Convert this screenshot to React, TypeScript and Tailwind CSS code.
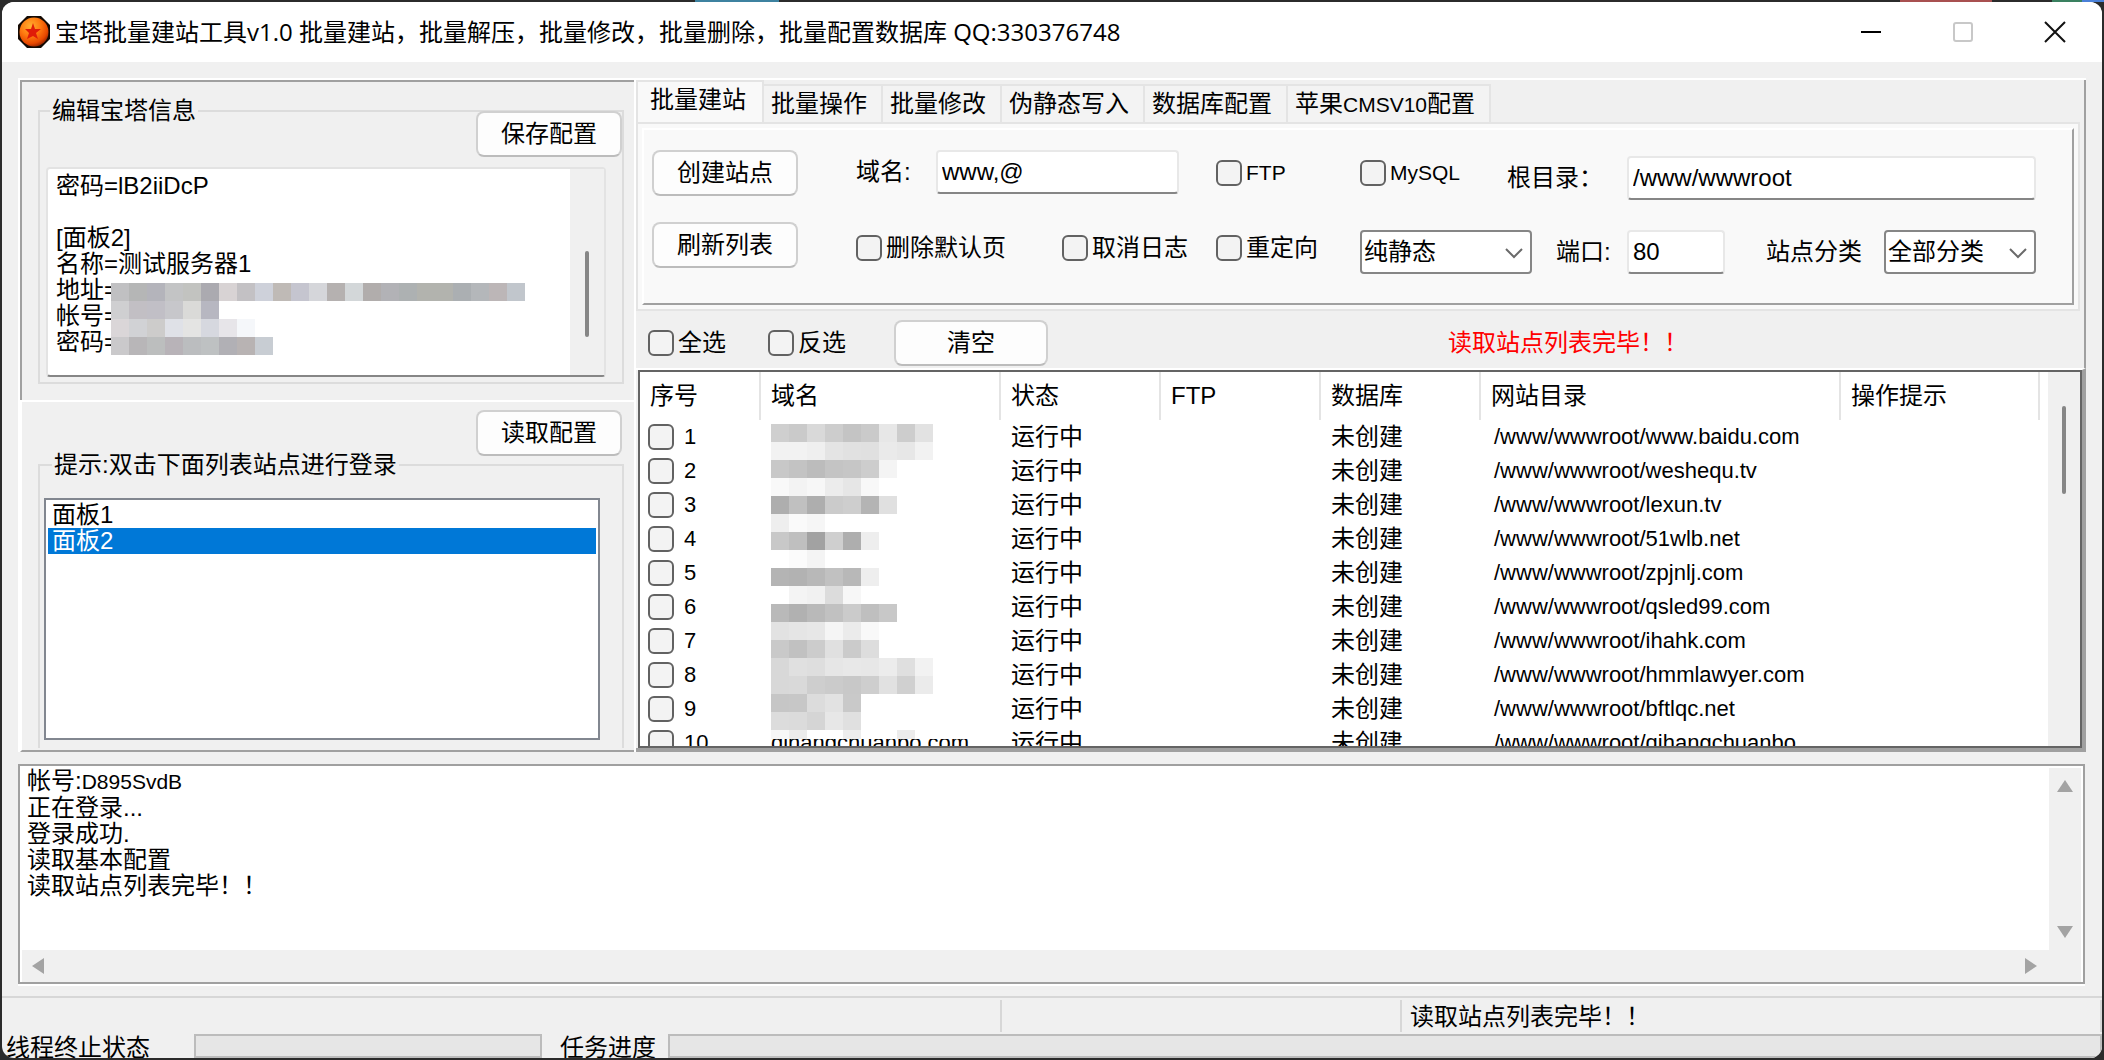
import { useState, type ReactNode } from "react";
import clsx from "clsx";

const tabs = ["批量建站", "批量操作", "批量修改", "伪静态写入", "数据库配置"];

const panels = ["面板1", "面板2"];

const sites = [
  { id: 1, domain: "", path: "/www/wwwroot/www.baidu.com" },
  { id: 2, domain: "", path: "/www/wwwroot/weshequ.tv" },
  { id: 3, domain: "", path: "/www/wwwroot/lexun.tv" },
  { id: 4, domain: "", path: "/www/wwwroot/51wlb.net" },
  { id: 5, domain: "", path: "/www/wwwroot/zpjnlj.com" },
  { id: 6, domain: "", path: "/www/wwwroot/qsled99.com" },
  { id: 7, domain: "", path: "/www/wwwroot/ihahk.com" },
  { id: 8, domain: "", path: "/www/wwwroot/hmmlawyer.com" },
  { id: 9, domain: "", path: "/www/wwwroot/bftlqc.net" },
  { id: 10, domain: "qihangchuanbo.com", path: "/www/wwwroot/qihangchuanbo" },
];

const configText = `密码=lB2iiDcP

[面板2]
名称=测试服务器1
地址=
帐号=
密码=`;

// one string per mosaic row, "--" is an empty cell
const domainMask = [
  "cf ca d9 cd c4 ca e7 cd e2",
  "f2 f2 ef e4 e1 e0 ea e7 f2",
  "c8 c3 bc c4 c6 cd f4",
  "f9 f3 f7 ec e6 f8",
  "ae c0 ae cb ce b4 e0",
  "ee fa f6",
  "c8 bf a2 cf ae ee",
  "-- fb f4",
  "b4 b2 b8 c1 b8 ee",
  "-- f4 f1 dc f7",
  "b9 b1 b9 c1 cb bf c8",
  "e2 e5 e7 f5 eb f9",
  "c9 c1 cc e0 cb dd",
  "d8 e0 de e6 e8 e7 ec df f2",
  "d8 d9 ce cb c8 ce e1 d0 eb",
  "c6 c7 dc e2 c9",
  "dc db d5 e7 e0",
  "f7 ec ff ff ed ff ff ec ff ff ff",
];

const configMask = [
  "c0c0c2 b5b6b6 b4b4bb c3c4c5 c2c3c0 abaab0 d8d3d4 c3c1c4 ced1da bfbab6 c5c5cf d5d6da b5b1b0 d3d7d9 b1adac b2b2b6 adb1b2 b2b3ae b2b3ae abafb2 b4b7ba bcb6b7 c1c6cc",
  "cfcfd1 c2bfc4 c1bfc6 c7c7cb dadad8 b7b7c1",
  "dad6d8 d1d2d5 cdcccb dfe1e7 e4e4e3 d6d8df e7e5e9 f5f7fa",
  "cac9cb b8b6b8 bcbebe b8b3b8 bbbdbf bec1c2 b1b0b5 b8b3b3 c8cdd3",
];

const Mosaic = ({ rows, height, className }: { rows: string[]; height: number; className?: string }) => (
  <svg width={23 * 18} height={height} className={className} shapeRendering="crispEdges" aria-hidden="true">
    {rows.map((row, y) =>
      row.split(" ").map((c, x) =>
        c === "--" ? null : (
          <rect key={`${x}-${y}`} x={x * 18} y={y * 18} width="18" height="18" fill={`#${c.length === 2 ? c + c + c : c}`} />
        )
      )
    )}
  </svg>
);

const AppIcon = () => (
  <svg width="34" height="34" viewBox="0 0 34 34" aria-hidden="true">
    <defs>
      <radialGradient id="ball" cx="0.38" cy="0.3" r="0.75">
        <stop offset="0" stopColor="#ffb030" />
        <stop offset="0.45" stopColor="#ff7a10" />
        <stop offset="0.8" stopColor="#e84800" />
        <stop offset="1" stopColor="#902000" />
      </radialGradient>
    </defs>
    <path d="M10 1h14l9 9v14l-9 9H10l-9-9V10z" fill="#140a04" />
    <circle cx="17" cy="17" r="14.5" fill="url(#ball)" />
    <path d="M16 8l2 6 6 0-5 4 2 6-5-3-6 3 2-6-4-4 6 0z" fill="#e01c08" />
  </svg>
);

const Button = ({ children, className }: { children: ReactNode; className?: string }) => (
  <button
    type="button"
    className={clsx(
      "h-[46px] rounded-lg border-2 border-[#d0d0d0] border-b-[#bcbcbc] bg-[#fdfdfd] text-center leading-none hover:bg-[#e5f1fb]",
      className
    )}
  >
    {children}
  </button>
);

const box =
  "size-[26px] shrink-0 appearance-none rounded-md border-2 border-[#626262] bg-[#f3f3f3] checked:bg-[#0078d7]";

const Check = ({ label, className }: { label: string; className?: string }) => (
  <label className={clsx("flex items-center gap-1 whitespace-nowrap", className)}>
    <input type="checkbox" className={box} />
    {label}
  </label>
);

const field = "h-11 min-w-0 border-2 border-[#e8e8e8] border-b-[#868686] rounded-sm bg-white px-1 text-[24px] outline-none";

const Select = ({ id, value, label, className }: { id: string; value: string; label?: string; className?: string }) => (
  <div className={clsx("relative", className)}>
    <select
      id={id}
      aria-label={label}
      className="block h-11 w-full appearance-none rounded-sm border-2 border-[#868686] bg-white pl-[2px] outline-none"
    >
      <option>{value}</option>
    </select>
    <svg width="18" height="12" viewBox="0 0 18 12" className="pointer-events-none absolute top-[18px] right-[9px]" fill="none" aria-hidden="true">
      <path d="M1 1l8 8 8-8" stroke="#6a6a6a" strokeWidth="2" />
    </svg>
  </div>
);

const Arrow = ({ d, w, h }: { d: string; w: number; h: number }) => (
  <svg width={w} height={h} aria-hidden="true">
    <path d={d} fill="#a3a3a3" />
  </svg>
);

const TitleBar = () => (
  <header className="flex h-[60px] shrink-0 items-center bg-white pr-9 pl-[15px]">
    <AppIcon />
    <h1 className="ml-1 flex-1 truncate font-['Open_Sans','Noto_Sans_CJK_SC',sans-serif]">
      宝塔批量建站工具v1.0 批量建站，批量解压，批量修改，批量删除，批量配置数据库 QQ:330376748
    </h1>
    <div className="flex items-center gap-[70px]">
      <button type="button" aria-label="最小化">
        <svg width="22" height="22" className="block">
          <path d="M1 11h20" stroke="#000" strokeWidth="2" />
        </svg>
      </button>
      <button type="button" aria-label="最大化" disabled>
        <svg width="22" height="22" fill="none" className="block">
          <rect x="2" y="2" width="18" height="18" rx="2" stroke="#c8c8c8" strokeWidth="2" />
        </svg>
      </button>
      <button type="button" aria-label="关闭">
        <svg width="22" height="22" className="block">
          <path d="M1 1l20 20M21 1L1 21" stroke="#111" strokeWidth="2" />
        </svg>
      </button>
    </div>
  </header>
);

const ConfigPanel = () => (
  <section className="relative h-[320px] border-t-2 border-l-2 border-[#a0a0a0] pt-4 pr-[10px] pl-4">
    <fieldset className="h-[286px] border-2 border-[#dcdcdc] pr-2 pl-[6px]">
      <legend className="ml-1 px-[2px] leading-[26px]">编辑宝塔信息</legend>
      <div className="relative mt-[43px] mr-2 flex h-[210px] rounded-sm border-2 border-[#e3e3e3] border-b-[#868686] bg-white">
        <textarea
          aria-label="宝塔信息"
          defaultValue={configText}
          spellCheck={false}
          className="min-w-0 flex-1 resize-none overflow-hidden py-1 pl-2 leading-[26px] outline-none"
        />
        <Mosaic rows={configMask} height={72} className="absolute top-[114px] left-[63px]" />
        <div className="flex w-[34px] justify-center bg-[#f0f0f0] pt-[82px]">
          <div className="h-[86px] w-1 rounded-full bg-[#868686]" />
        </div>
      </div>
    </fieldset>
    <Button className="absolute top-[29px] right-3 w-[146px]">保存配置</Button>
  </section>
);

const PanelList = () => {
  const [selected, setSelected] = useState("面板2");

  return (
    <section className="relative flex-1 overflow-hidden border-t-2 border-b-2 border-l-2 border-white border-b-[#a0a0a0] pt-[50px] pr-[10px] pl-4">
      <fieldset className="h-[296px] border-2 border-b-0 border-[#dcdcdc] pr-[22px] pl-1">
        <legend className="ml-2 px-[2px] leading-[26px]">提示:双击下面列表站点进行登录</legend>
        <ul role="listbox" aria-label="面板" className="mt-5 h-[242px] border-2 border-[#828790] bg-white p-[2px]">
          {panels.map((p) => (
            <li
              key={p}
              role="option"
              aria-selected={p === selected}
              onClick={() => setSelected(p)}
              className={clsx("px-1 leading-[26px]", p === selected && "bg-[#0078d7] text-white")}
            >
              {p}
            </li>
          ))}
        </ul>
      </fieldset>
      <Button className="absolute top-2 right-3 w-[146px]">读取配置</Button>
    </section>
  );
};

const tab = "h-[38px] border-2 border-b-0 border-l-0 border-[#e4e4e4] bg-[#f3f3f3] pr-[14px] pl-[7px] whitespace-nowrap";

const TabBar = () => (
  <nav className="flex items-end" role="tablist">
    {tabs.map((t, i) => (
      <button
        key={t}
        type="button"
        role="tab"
        aria-selected={i === 0}
        className={
          i === 0 ? "h-[42px] border-2 border-b-0 border-[#e4e4e4] bg-[#f9f9f9] pr-4 pb-1 pl-3 whitespace-nowrap" : tab
        }
      >
        {t}
      </button>
    ))}
    <button type="button" role="tab" aria-selected={false} className={tab}>
      苹果<span className="text-[21px]">CMSV10</span>配置
    </button>
  </nav>
);

const CreateForm = () => (
  <div className="mr-1 border-2 border-[#e4e4e4] bg-[#f9f9f9] p-1">
    <form className="grid h-[177px] grid-cols-[204px_80px_126px_154px_144px_147px_120px_1fr] grid-rows-[50px_52px] items-center gap-y-[22px] border-2 border-white border-r-[#a0a0a0] border-b-[#a0a0a0] pt-5 pr-9 pl-2">
      <Button className="w-[146px] self-start">创建站点</Button>
      <label htmlFor="domain" className="self-start leading-[44px]">域名:</label>
      <input id="domain" defaultValue="www,@" className={clsx(field, "col-span-2 w-[243px] self-start")} />
      <Check label="FTP" className="h-[46px] self-start text-[21px]" />
      <Check label="MySQL" className="h-[46px] self-start text-[21px]" />
      <label htmlFor="root" className="self-end leading-[44px]">根目录：</label>
      <input id="root" defaultValue="/www/wwwroot" className={clsx(field, "self-end")} />

      <Button className="w-[146px] self-start">刷新列表</Button>
      <Check label="删除默认页" className="col-span-2" />
      <Check label="取消日志" />
      <Check label="重定向" />
      <div className="col-span-2 flex items-center gap-6 self-end">
        <Select id="php" value="纯静态" label="PHP版本" className="w-[172px]" />
        <label htmlFor="port">端口:</label>
      </div>
      <div className="flex items-center self-end">
        <input id="port" defaultValue="80" className={clsx(field, "w-[98px]")} />
        <label htmlFor="category" className="mr-[22px] ml-auto">站点分类</label>
        <Select id="category" value="全部分类" className="w-[152px]" />
      </div>
    </form>
  </div>
);

const SiteTable = () => (
  <div className="flex h-[384px] border-t-2 border-r-4 border-b-4 border-white border-r-[#a0a0a0] border-b-[#a0a0a0] pl-[2px]">
    <div className="flex flex-1 overflow-hidden border-2 border-[#646464] bg-white">
      <div className="relative flex-1 overflow-hidden pr-2">
        <table className="w-full table-fixed text-left">
          <colgroup>
            <col className="w-[120px]" />
            <col className="w-[240px]" />
            <col className="w-[160px]" />
            <col className="w-[160px]" />
            <col className="w-[160px]" />
            <col className="w-[360px]" />
            <col />
          </colgroup>
          <thead>
            <tr className="h-12">
              {["序号", "域名", "状态", "FTP", "数据库", "网站目录", "操作提示"].map((h) => (
                <th key={h} className="border-r-2 border-[#e4e4e4] p-0 pl-[10px] font-normal">
                  {h}
                </th>
              ))}
            </tr>
          </thead>
          <tbody>
            {sites.map((s) => (
              <tr key={s.id} className="h-[34px] leading-[34px] whitespace-nowrap">
                <td className="p-0 pl-2">
                  <label className="flex items-center gap-[10px] text-[22px]">
                    <input type="checkbox" className={box} />
                    {s.id}
                  </label>
                </td>
                <td className="p-0 pl-[11px] text-[22px]">{s.domain}</td>
                <td className="p-0 pl-[11px]">运行中</td>
                <td className="p-0" />
                <td className="p-0 pl-[11px]">未创建</td>
                <td className="p-0 pl-[14px] text-[22px]">{s.path}</td>
                <td className="p-0" />
              </tr>
            ))}
          </tbody>
        </table>
        <Mosaic rows={domainMask} height={315} className="absolute top-[52px] left-[131px]" />
      </div>
      <div className="flex w-8 justify-center bg-[#f0f0f0] pt-[34px]">
        <div className="h-[88px] w-1 rounded-full bg-[#868686]" />
      </div>
    </div>
  </div>
);

const LogPanel = () => (
  <section className="mt-3 mr-[17px] ml-4 flex min-h-0 flex-1 flex-col border-b-2 border-white">
    <div className="flex min-h-0 flex-1 flex-col border-2 border-[#a0a0a0] bg-white p-[2px] pb-0">
      <div className="flex min-h-0 flex-1">
        <div role="log" className="flex-1 overflow-hidden pl-[5px] leading-[26px]">
          <p>
            帐号:<span className="text-[21px]">D895SvdB</span>
          </p>
          <p>正在登录...</p>
          <p>登录成功.</p>
          <p>读取基本配置</p>
          <p>读取站点列表完毕！！</p>
        </div>
        <div className="flex w-8 flex-col items-center justify-between bg-[#f0f0f0] py-3">
          <Arrow w={16} h={12} d="M8 0l8 12H0z" />
          <Arrow w={16} h={12} d="M8 12L0 0h16z" />
        </div>
      </div>
      <div className="flex h-8 items-center justify-between bg-[#f0f0f0] pr-11 pl-[10px]">
        <Arrow w={12} h={16} d="M0 8l12-8v16z" />
        <Arrow w={12} h={16} d="M12 8L0 0v16z" />
      </div>
    </div>
  </section>
);

const StatusBar = () => (
  <footer className="mt-[10px] shrink-0 border-t-2 border-[#d7d7d7]">
    <div className="flex h-9 py-[2px]">
      <div className="w-[1000px] border-r-2 border-[#d7d7d7]" />
      <div className="w-[400px] border-r-2 border-[#d7d7d7]" />
      <p className="flex-1 border-r-2 border-[#d7d7d7] pl-2 leading-[34px]">读取站点列表完毕！！</p>
    </div>
    <div className="flex h-6 overflow-hidden">
      <span className="w-[192px] shrink-0 pl-1 leading-[28px]">线程终止状态</span>
      <div role="progressbar" aria-label="线程终止状态" className="w-[348px] border-2 border-[#bcbcbc] bg-[#e6e6e6]" />
      <span className="w-[126px] shrink-0 pl-[18px] leading-[28px]">任务进度</span>
      <div role="progressbar" aria-label="任务进度" className="flex-1 border-2 border-[#bcbcbc] bg-[#e6e6e6]" />
    </div>
  </footer>
);

const App = () => {
  return (
    <div
      lang="zh-CN"
      className="flex h-screen flex-col bg-[#2b2b2b] font-['Liberation_Sans','Noto_Sans_CJK_SC',sans-serif] text-[24px] leading-8 text-black"
    >
      {/* Desktop showing above the window */}
      <div className="flex h-[2px] shrink-0">
        <div className="ml-[695px] w-[84px] bg-[#3d82a0]" />
        <div className="mr-[60px] ml-auto w-[92px] bg-[#a85050]" />
        <div className="w-[30px] bg-[#3a8060]" />
        <div className="w-[22px] bg-[#4a80d8]" />
      </div>
      <div className="mx-[2px] mb-[2px] flex min-h-0 flex-1 flex-col overflow-hidden rounded-xl bg-[#f0f0f0]">
        <TitleBar />
        <main className="flex shrink-0 pt-4 pr-4 pl-4">
          <div className="flex w-[616px] shrink-0 flex-col border-t-2 border-l-2 border-white">
            <ConfigPanel />
            <PanelList />
          </div>
          <div className="min-w-0 flex-1 border-t-2 border-l-2 border-white">
            <div className="border-r-2 border-[#a0a0a0]">
              <TabBar />
              <CreateForm />
              <div className="flex h-[57px] items-center pt-[6px] pl-3">
                <Check label="全选" className="w-[120px]" />
                <Check label="反选" className="w-[126px]" />
                <Button className="w-[154px]">清空</Button>
                <p className="mr-[396px] ml-auto text-[#ff0000]">读取站点列表完毕！！</p>
              </div>
            </div>
            <SiteTable />
          </div>
        </main>
        <LogPanel />
        <StatusBar />
      </div>
    </div>
  );
};

export default App;
